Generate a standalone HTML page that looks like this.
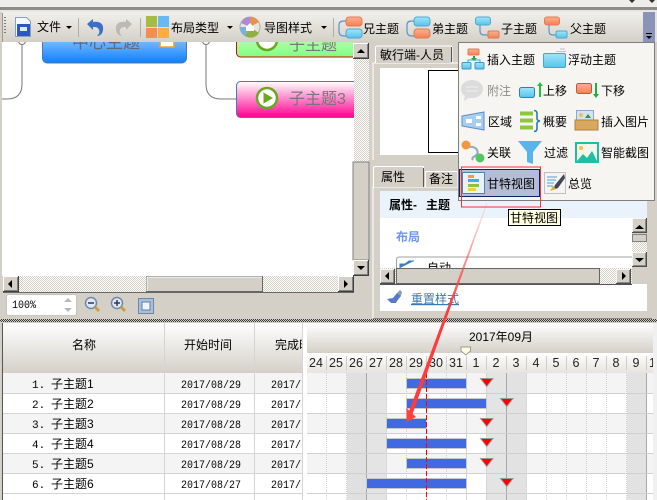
<!DOCTYPE html>
<html><head><meta charset="utf-8"><style>
html,body{margin:0;padding:0;background:#d4d0c8}
svg{display:block}
text{font-family:"Liberation Sans","WenQuanYi Zen Hei","Noto Sans CJK SC",sans-serif;font-size:13px;fill:#000}
.m{font-family:"Liberation Mono","WenQuanYi Zen Hei",monospace;font-size:11px}
.d{font-family:"Liberation Sans",sans-serif;font-size:12.5px;fill:#222;text-anchor:middle}
.c{text-anchor:middle}
</style></head><body>
<svg width="657" height="500" viewBox="0 0 657 500" xmlns="http://www.w3.org/2000/svg">
<defs>
<linearGradient id="tb" x1="0" y1="0" x2="0" y2="1"><stop offset="0" stop-color="#f2f0ec"/><stop offset="1" stop-color="#d4d0c8"/></linearGradient>
<linearGradient id="hd" x1="0" y1="0" x2="0" y2="1"><stop offset="0" stop-color="#fff"/><stop offset="1" stop-color="#d4d0c8"/></linearGradient>
<linearGradient id="dy" x1="0" y1="0" x2="0" y2="1"><stop offset="0" stop-color="#fff"/><stop offset="1" stop-color="#e6e4de"/></linearGradient>
<linearGradient id="bl" x1="0" y1="0" x2="0" y2="1"><stop offset="0" stop-color="#a8d4ff"/><stop offset="1" stop-color="#0f80ff"/></linearGradient>
<linearGradient id="gr" x1="0" y1="0" x2="0" y2="1"><stop offset="0" stop-color="#d8ffd0"/><stop offset="1" stop-color="#80ff80"/></linearGradient>
<linearGradient id="pk" x1="0" y1="0" x2="0" y2="1"><stop offset="0" stop-color="#fff"/><stop offset="1" stop-color="#ff0090"/></linearGradient>
<linearGradient id="cy" x1="0" y1="0" x2="0" y2="1"><stop offset="0" stop-color="#a4e4f8"/><stop offset="1" stop-color="#55c4ea"/></linearGradient>
<linearGradient id="or" x1="0" y1="0" x2="0" y2="1"><stop offset="0" stop-color="#fdb090"/><stop offset="1" stop-color="#f57f55"/></linearGradient>
<linearGradient id="ar" x1="0" y1="0" x2="0" y2="1"><stop offset="0" stop-color="#ff5050" stop-opacity=".1"/><stop offset=".5" stop-color="#ff3b3b"/><stop offset="1" stop-color="#ff3b3b"/></linearGradient>
<pattern id="ht" width="2" height="2" patternUnits="userSpaceOnUse"><rect width="2" height="2" fill="#fff"/><rect width="1" height="1" fill="#d4d0c8"/><rect x="1" y="1" width="1" height="1" fill="#d4d0c8"/></pattern>
<pattern id="dt" width="2" height="2" patternUnits="userSpaceOnUse"><rect width="2" height="2" fill="#d4d0c8"/><rect width="1" height="1" fill="#333"/><rect x="1" y="1" width="1" height="1" fill="#333"/></pattern>
<symbol id="b" viewBox="0 0 16 16" width="16" height="16"><rect width="16" height="16" fill="#404040"/><rect width="15" height="15" fill="#fff"/><rect x="1" y="1" width="14" height="14" fill="#808080"/><rect x="1" y="1" width="13" height="13" fill="#d4d0c8"/></symbol>
</defs>

<!-- window top -->
<rect width="657" height="500" fill="#d4d0c8"/>
<rect width="657" height="7" fill="#efedea"/>
<rect y="7" width="657" height="3" fill="#8e8c88"/>
<rect y="10" width="657" height="2" fill="#e8e6e2"/>
<path d="M629 0l3 3 3-3zM649 0l3 3 3-3" fill="#333"/>

<!-- canvas -->
<rect x="2" y="40" width="352" height="236" fill="#fff"/>
<path d="M22 40V84Q22 99 7 99H2M206 40V84Q206 99 221 99H236" fill="none" stroke="#777" stroke-width="1"/>
<circle cx="22" cy="41" r="3.500" fill="#fff" stroke="#777"/><circle cx="206" cy="41" r="3.500" fill="#fff" stroke="#777"/>
<rect x="42.500" y="30" width="144" height="33" rx="5" fill="url(#bl)" stroke="#4a7ab0"/>
<text x="72" y="48" style="font-size:17px;fill:#667">中心主题</text>
<rect x="160" y="38" width="14" height="9" fill="#fff" stroke="#f0a020" stroke-width="1.500"/>
<rect x="236.500" y="25" width="130" height="32" rx="4" fill="url(#gr)" stroke="#e00000"/>
<circle cx="267" cy="40" r="10" fill="#fff" stroke="#6aa820" stroke-width="2.500"/>
<text x="289" y="50" style="font-size:16px;fill:#777">子主题</text>
<rect x="236.500" y="81.500" width="130" height="36" rx="4" fill="url(#pk)" stroke="#4a7ab0"/>
<circle cx="267" cy="98" r="10" fill="#fff" stroke="#6aa820" stroke-width="2.500"/>
<path d="M263.500 92.500L273 98l-9.500 5.500z" fill="#6aa820"/>
<text x="289" y="104" style="font-size:16px;fill:#777">子主题3</text>
<rect x="354" y="42" width="19" height="236" fill="#d4d0c8"/>
<rect x="0" y="40" width="2" height="280" fill="#d4d0c8"/>

<!-- canvas v scroll -->
<rect x="354" y="58" width="15" height="104" fill="url(#ht)"/>
<use href="#b" x="353" y="43"/><path d="M357 53h8l-4-4z" fill="#000"/>
<rect x="353" y="162" width="16" height="98" fill="#d4d0c8" stroke="#808080"/>
<use href="#b" x="353" y="260"/><path d="M357 266h8l-4 4z" fill="#000"/>
<!-- canvas h scroll -->
<rect x="3" y="276" width="351" height="16" fill="url(#ht)"/>
<rect x="3" y="292" width="351" height="1" fill="#666"/>
<use href="#b" x="3" y="276"/><path d="M12 280v8l-4-4z" fill="#000"/>
<rect x="146.500" y="276.500" width="116" height="15" fill="#d4d0c8" stroke="#666"/>
<path d="M147 291V277H262" stroke="#fff" fill="none"/>
<use href="#b" x="338" y="276"/><path d="M344 280v8l4-4z" fill="#000"/>

<!-- zoom -->
<rect x="6.500" y="294.500" width="70" height="21" rx="2" fill="#fff" stroke="#c4c4bc"/>
<text x="12" y="308" class="m" textLength="24" lengthAdjust="spacingAndGlyphs">100%</text>
<path d="M64 302l4-4 4 4zM64 308l4 4 4-4" fill="#b8b8b8"/>
<circle cx="91" cy="303" r="5.500" fill="#dfe8f8" stroke="#7088a8" stroke-width="1.500"/><path d="M88 303h6" stroke="#335" stroke-width="1.500"/><path d="M95 307l4 4" stroke="#c8a040" stroke-width="3"/>
<circle cx="117" cy="303" r="5.500" fill="#dfe8f8" stroke="#7088a8" stroke-width="1.500"/><path d="M114 303h6M117 300v6" stroke="#335" stroke-width="1.500"/><path d="M121 307l4 4" stroke="#c8a040" stroke-width="3"/>
<rect x="138.500" y="298.500" width="15" height="15" fill="#a8c0dc" stroke="#6888ac"/><rect x="142" y="302" width="8" height="8" fill="#eef4fb" stroke="#6a7a98"/>
<rect x="0" y="319" width="657" height="3" fill="url(#dt)"/>

<!-- right top panel -->
<rect x="373" y="63" width="284" height="97" fill="#d4d0c8"/>
<path d="M373 160V63H648" stroke="#fff" fill="none"/>
<path d="M375.500 63V48q0-2 2-2H451q1 0 1 2V63" fill="#d4d0c8" stroke="#fff"/>
<path d="M451.500 47V62" stroke="#555"/>
<text x="380" y="59" style="font-size:12px">敏行端-人员</text>
<rect x="380" y="68" width="270" height="87" fill="#fff"/>
<rect x="428.500" y="70.500" width="60" height="82" fill="#fff" stroke="#000"/>

<!-- right bottom panel -->
<path d="M373 318V187H650" stroke="#fff" fill="none"/>
<path d="M373.500 187V168q0-1.500 1.500-1.500H423.500V187" fill="#d4d0c8" stroke="#fff"/>
<path d="M423.500 168V187" stroke="#555"/>
<text x="381" y="181" style="font-size:12px">属性</text>
<path d="M425.500 187V171.500H458V187" fill="#d4d0c8" stroke="#fff"/>
<text x="429" y="183" style="font-size:12px">备注</text>
<rect x="380" y="191" width="267" height="120" fill="#fff"/>
<rect x="380" y="191" width="267" height="27" fill="#eaf3fb"/>
<text x="389" y="209" style="font-size:12px;font-weight:bold">属性-</text>
<text x="426" y="209" style="font-size:12px;font-weight:bold">主题</text>
<text x="396" y="241" style="font-size:12px;font-weight:bold;fill:#6f96e8">布局</text>
<path d="M396.500 268V260q0-3 3-3H632" fill="#fff" stroke="#a0a0a0"/>
<path d="M400 268v-4h5l4-3h5" fill="#3a80c0" stroke="#3a80c0"/>
<text x="427" y="272" style="font-size:12px">自动</text>
<rect x="632" y="218" width="15" height="66" fill="#d4d0c8"/>
<rect x="632" y="241" width="15" height="11" fill="url(#ht)"/>
<use href="#b" x="632" y="218" width="15" height="15"/><path d="M635 229h9l-4.500-4z" fill="#000"/>
<rect x="632.500" y="234.500" width="14" height="7" fill="#d4d0c8" stroke="#808080"/>
<use href="#b" x="632" y="252" width="15" height="15"/><path d="M635 258h9l-4.500 4z" fill="#000"/>
<rect x="380" y="268" width="252" height="16" fill="url(#ht)"/>
<use href="#b" x="380" y="269" width="15" height="15"/><path d="M389 272v8l-4-4z" fill="#000"/>
<rect x="396.500" y="268.500" width="203" height="15" fill="#d4d0c8" stroke="#666"/>
<use href="#b" x="616" y="269" width="15" height="15"/><path d="M622 272v8l4-4z" fill="#000"/>
<path d="M380 284.500H632" stroke="#555"/>
<path d="M387 299l6-1 4-5 4 3-4 5-1 2-5 0z" fill="#5878c8"/><path d="M397 293l3-3 2 2-1 4z" fill="#8a9ab8"/>
<text x="411" y="303" style="font-size:12px;fill:#3b7ab0;text-decoration:underline">重置样式</text>
<path d="M373 318.500H652" stroke="#888"/>

<!-- toolbar -->
<rect x="2" y="12" width="641" height="30" fill="url(#tb)"/>
<rect x="2" y="13" width="1" height="29" fill="#9a9890"/>
<path d="M5 17v1M5 20v1M5 23v1M5 26v1M5 29v1M5 32v1" stroke="#777" stroke-width="2"/>
<path d="M15.500 17.500h11l4 4v15h-15z" fill="#f4f8fe" stroke="#8aa0c0"/><rect x="17" y="24" width="13" height="12" fill="#2a58c0"/><rect x="20" y="27" width="7" height="4" fill="#dfe8ff"/>
<text x="37" y="31" style="font-size:12px">文件</text>
<path d="M66 26h6l-3 3z" fill="#000"/>
<path d="M78.500 18V37" stroke="#b0aea8"/>
<path d="M87 24l6-5v3c7-1 11 2 10 8-.5 4-3 6-6 6 2-2 3-4 2-6-1-3-3-3-6-3v3z" fill="#3a70c8"/>
<path d="M132 24l-6-5v3c-7-1-11 2-10 8 .5 4 3 6 6 6-2-2-3-4-2-6 1-3 3-3 6-3v3z" fill="#bcbab6"/>
<path d="M140.500 18V37" stroke="#b0aea8"/>
<rect x="146" y="16" width="11" height="11" fill="#a4bb44"/><rect x="158" y="16" width="11" height="11" fill="#68b8f4"/><rect x="146" y="28" width="11" height="10" fill="#f78a58"/><rect x="158" y="28" width="11" height="10" fill="#fbad44"/>
<text x="171" y="32" style="font-size:12px">布局类型</text>
<path d="M227 26h6l-3 3z" fill="#000"/>
<circle cx="250" cy="27" r="10" fill="#e8e4d8" stroke="#aaa"/>
<path d="M250 17a10 10 0 0 1 9 5l-9 5z" fill="#e89050"/><path d="M250 17a10 10 0 0 0-9 6l9 4z" fill="#b088d8"/><path d="M240 27a10 10 0 0 0 5 9l5-9z" fill="#78b0e0"/><path d="M245 36a10 10 0 0 0 14-3l-9-6z" fill="#90b040"/>
<path d="M246 27l4-4 4 4v4h-8z" fill="#fff"/>
<text x="264" y="32" style="font-size:12px">导图样式</text>
<path d="M321 26h6l-3 3z" fill="#000"/>
<path d="M333.500 18V37" stroke="#b0aea8"/>

<path d="M350 21h-6q-5 0-5 4v6q0 5 5 5h6" fill="none" stroke="#5598c8" stroke-width="1.200"/>
<rect x="346" y="17" width="16" height="9" rx="3" fill="url(#or)" stroke="#e07a50"/><rect x="346" y="29" width="16" height="9" rx="3" fill="url(#cy)" stroke="#50a8d0"/>
<text x="363" y="33" style="font-size:12px">兄主题</text>
<path d="M418 21h-6q-5 0-5 4v6q0 5 5 5h6" fill="none" stroke="#5598c8" stroke-width="1.200"/>
<rect x="414" y="17" width="16" height="9" rx="3" fill="url(#cy)" stroke="#50a8d0"/><rect x="414" y="29" width="16" height="9" rx="3" fill="url(#or)" stroke="#e07a50"/>
<text x="432" y="33" style="font-size:12px">弟主题</text>
<path d="M480 25v6q0 4 4 4h5" fill="none" stroke="#5598c8" stroke-width="1.200"/>
<rect x="475.500" y="17" width="15" height="8" rx="2.500" fill="url(#cy)" stroke="#50a8d0"/><rect x="488" y="31" width="11" height="7" rx="1.500" fill="url(#or)" stroke="#e07a50"/>
<text x="501" y="33" style="font-size:12px">子主题</text>
<path d="M549 25v6q0 4 4 4h5" fill="none" stroke="#5598c8" stroke-width="1.200"/>
<rect x="544.500" y="17" width="15" height="8" rx="2.500" fill="url(#or)" stroke="#e07a50"/><rect x="556" y="31" width="11" height="7" rx="1.500" fill="url(#cy)" stroke="#50a8d0"/>
<text x="570" y="33" style="font-size:12px">父主题</text>
<rect x="643" y="12" width="12" height="30" fill="#8a94b8"/>
<path d="M646 33.500h6" stroke="#000"/><path d="M646 36h6l-3 3z" fill="#000"/>
<rect x="655" y="12" width="2" height="30" fill="#e4e2dc"/>

<!-- dropdown menu -->
<rect x="458.500" y="42.500" width="196" height="158" fill="#f7f5f2" stroke="#7e7e7e"/>
<!-- row1 -->
<rect x="468" y="49" width="11" height="6" rx="1" fill="url(#or)" stroke="#e07a50"/><path d="M473 56h2v2h2l-3 3-3-3h2z" fill="#30a030"/><path d="M468 62v-2h12v2" fill="none" stroke="#4aa0d0"/>
<rect x="462" y="62.500" width="9" height="6.500" rx="1" fill="url(#cy)" stroke="#3c98c8"/><rect x="475" y="62.500" width="9" height="6.500" rx="1" fill="url(#cy)" stroke="#3c98c8"/>
<text x="487" y="64" style="font-size:12px">插入主题</text>
<rect x="543.500" y="53.500" width="22" height="14" rx="1.500" fill="url(#cy)" stroke="#40a8cc"/><path d="M560 49h5M556 51.500h10" stroke="#a8c8dc"/>
<text x="568" y="64" style="font-size:12px">浮动主题</text>
<!-- row2 -->
<ellipse cx="472" cy="89" rx="11" ry="9" fill="#dcdcdc"/><path d="M465 95l-1 6 6-4z" fill="#dcdcdc"/><path d="M466 87h12M466 91h12" stroke="#efefef"/>
<text x="487" y="95" style="font-size:12px;fill:#8c8c8c">附注</text>
<rect x="519.500" y="87.500" width="15" height="10" rx="2" fill="url(#cy)" stroke="#3080b0"/><path d="M540 82l3 4h-2v11h-2V86h-2z" fill="#20c040"/>
<text x="543" y="95" style="font-size:12px">上移</text>
<rect x="576.500" y="83.500" width="15" height="10" rx="2" fill="url(#or)" stroke="#d05030"/><path d="M595 83h2v11h2l-3 4-3-4h2z" fill="#20b040"/>
<text x="601" y="95" style="font-size:12px">下移</text>
<!-- row3 -->
<path d="M462 116l22-4v18l-22-4z" fill="#a8cdf0" stroke="#5890c8"/><rect x="466" y="119" width="6" height="4" fill="#fff"/><rect x="476" y="116" width="5" height="3" fill="#fff"/><rect x="476" y="123" width="5" height="3" fill="#fff"/>
<text x="488" y="126" style="font-size:12px">区域</text>
<path d="M520 113.500h13M520 120.500h13M520 127.500h13" stroke="#8cc63c" stroke-width="4"/>
<path d="M534 110.500q3 0 3 3v5q0 2 3 2.500q-3 .5-3 2.500v5q0 3-3 3" fill="none" stroke="#2a7ab8" stroke-width="1.600"/>
<text x="543" y="126" style="font-size:12px">概要</text>
<rect x="576.500" y="110.500" width="17" height="14" fill="#cfe4f6" stroke="#8aa8c8"/><circle cx="581" cy="115" r="2" fill="#f4c040"/><path d="M588 114l3 4h-6z" fill="#4a8a30"/>
<rect x="575" y="120" width="23" height="10" fill="#d8a860" stroke="#b08040"/>
<text x="601" y="126" style="font-size:12px">插入图片</text>
<!-- row4 -->
<path d="M467 147q8-1 10 3t-2 6-2 4" fill="none" stroke="#90a8c0" stroke-width="2"/><circle cx="466" cy="145" r="4.500" fill="#f09840"/><circle cx="480" cy="158" r="4.500" fill="#50c860"/>
<text x="487" y="157" style="font-size:12px">关联</text>
<path d="M518 141h24l-9 11v12l-6-2v-10z" fill="#58b4ec"/>
<text x="544" y="157" style="font-size:12px">过滤</text>
<rect x="575" y="142" width="24" height="21" fill="#1cc0a0"/><rect x="577" y="144" width="20" height="17" fill="#f4f4e8"/><circle cx="581" cy="148" r="2" fill="#f4c040"/><path d="M577 161l6-7 4 4 5-7 5 10z" fill="#1cc0a0"/>
<text x="601" y="157" style="font-size:12px">智能截图</text>
<!-- row5 highlighted -->
<rect x="459.500" y="169.500" width="80" height="27" fill="#b5bdd6" stroke="#0a246a"/>
<rect x="462.500" y="172.500" width="22" height="21" fill="#e8f2f8" stroke="#4a8aa8"/>
<path d="M468 175h6v3h-6z" fill="#f0a030"/><path d="M468 179h11v3h-11z" fill="#40b0e0"/><path d="M468 184h11v3h-11z" fill="#90c040"/><path d="M468 188h8v3h-8z" fill="#f0d040"/>
<text x="487" y="188" style="font-size:12px">甘特视图</text>
<rect x="544.500" y="172.500" width="21" height="21" fill="#f4f4f4" stroke="#c0c0c0"/><path d="M547 177h10M547 180h9M547 183h7M547 186h6" stroke="#50a0d0"/><path d="M564 174l-9 11-2 5 5-2 7-10z" fill="#445"/><path d="M553 186l-3 5 6-2z" fill="#e8b030"/>
<text x="568" y="188" style="font-size:12px">总览</text>

<!-- red box, tooltip -->
<rect x="461.500" y="167" width="79" height="40" fill="none" stroke="#ee3333"/>
<rect x="508.500" y="209.500" width="52" height="16" fill="#ffffe1" stroke="#000"/>
<text x="510" y="222" style="font-size:12px">甘特视图</text>

<!-- gantt table -->
<rect x="2" y="323" width="655" height="177" fill="#fff"/>
<rect x="2" y="323" width="1" height="177" fill="#555"/>
<rect x="3" y="323" width="300" height="50" fill="url(#hd)"/>
<text x="84" y="349" class="c" style="font-size:12px">名称</text>
<text x="208" y="349" class="c" style="font-size:12px">开始时间</text>
<text x="275" y="349" style="font-size:12px">完成时</text>
<rect x="303" y="323" width="4" height="177" fill="#fff"/>
<rect x="3" y="373" width="300" height="20" fill="#f4f4f4"/>
<rect x="3" y="413" width="300" height="20" fill="#f4f4f4"/>
<rect x="3" y="453" width="300" height="20" fill="#f4f4f4"/>
<rect x="302" y="323" width="5" height="50" fill="#fff"/>
<rect x="302" y="373" width="5" height="127" fill="#fff"/>
<path d="M3 393.500H302M3 413.500H302M3 433.500H302M3 453.500H302M3 473.500H302M3 493.500H302" stroke="#d4d4d4"/>
<path d="M164.500 323V500M254.500 323V500M302.500 323V500" stroke="#d4d4d4"/>
<rect x="303" y="323" width="3" height="177" fill="#fff"/>
<text x="32" y="388" class="m">1.</text><text x="51" y="388" style="font-size:12px">子主题1</text>
<text x="32" y="408" class="m">2.</text><text x="51" y="408" style="font-size:12px">子主题2</text>
<text x="32" y="428" class="m">3.</text><text x="51" y="428" style="font-size:12px">子主题3</text>
<text x="32" y="448" class="m">4.</text><text x="51" y="448" style="font-size:12px">子主题4</text>
<text x="32" y="468" class="m">5.</text><text x="51" y="468" style="font-size:12px">子主题5</text>
<text x="32" y="488" class="m">6.</text><text x="51" y="488" style="font-size:12px">子主题6</text>
<text x="181" y="388" class="m" textLength="60" lengthAdjust="spacingAndGlyphs">2017/08/29</text><text x="271" y="388" class="m" textLength="30" lengthAdjust="spacingAndGlyphs">2017/</text>
<text x="181" y="408" class="m" textLength="60" lengthAdjust="spacingAndGlyphs">2017/08/29</text><text x="271" y="408" class="m" textLength="30" lengthAdjust="spacingAndGlyphs">2017/</text>
<text x="181" y="428" class="m" textLength="60" lengthAdjust="spacingAndGlyphs">2017/08/28</text><text x="271" y="428" class="m" textLength="30" lengthAdjust="spacingAndGlyphs">2017/</text>
<text x="181" y="448" class="m" textLength="60" lengthAdjust="spacingAndGlyphs">2017/08/28</text><text x="271" y="448" class="m" textLength="30" lengthAdjust="spacingAndGlyphs">2017/</text>
<text x="181" y="468" class="m" textLength="60" lengthAdjust="spacingAndGlyphs">2017/08/29</text><text x="271" y="468" class="m" textLength="30" lengthAdjust="spacingAndGlyphs">2017/</text>
<text x="181" y="488" class="m" textLength="60" lengthAdjust="spacingAndGlyphs">2017/08/27</text><text x="271" y="488" class="m" textLength="30" lengthAdjust="spacingAndGlyphs">2017/</text>

<!-- gantt chart -->
<rect x="307" y="323" width="346" height="30" fill="url(#hd)"/>
<text x="501" y="341" class="c" style="font-size:12px">2017年09月</text>
<rect x="307" y="353" width="346" height="20" fill="url(#dy)"/>
<text x="316" y="367" class="d">24</text><text x="336" y="367" class="d">25</text><text x="356" y="367" class="d">26</text><text x="376" y="367" class="d">27</text><text x="396" y="367" class="d">28</text><text x="416" y="367" class="d">29</text><text x="436" y="367" class="d">30</text><text x="456" y="367" class="d">31</text><text x="476" y="367" class="d">1</text><text x="496" y="367" class="d">2</text><text x="516" y="367" class="d">3</text><text x="536" y="367" class="d">4</text><text x="556" y="367" class="d">5</text><text x="576" y="367" class="d">6</text><text x="596" y="367" class="d">7</text><text x="616" y="367" class="d">8</text><text x="636" y="367" class="d">9</text><text x="656" y="367" class="d">10</text>
<path d="M326.500 356V370M346.500 356V370M366.500 356V370M386.500 356V370M406.500 356V370M426.500 356V370M446.500 356V370M466.500 356V370M486.500 356V370M506.500 356V370M526.500 356V370M546.500 356V370M566.500 356V370M586.500 356V370M606.500 356V370M626.500 356V370M646.500 356V370" stroke="#cfcdc8"/>
<path d="M461 347h9.500v4l-4.700 4-4.800-4z" fill="#fdfde0" stroke="#999"/>
<rect x="307" y="373" width="346" height="127" fill="#fff"/>
<rect x="307" y="373" width="346" height="20" fill="#f4f4f4"/><rect x="307" y="413" width="346" height="20" fill="#f4f4f4"/><rect x="307" y="453" width="346" height="20" fill="#f4f4f4"/>
<rect x="347" y="373" width="20" height="127" fill="#e0e0e0"/><rect x="367" y="373" width="20" height="127" fill="#e4e4e4"/>
<rect x="487" y="373" width="20" height="127" fill="#e4e4e4"/><rect x="507" y="373" width="20" height="127" fill="#e2e2e2"/>
<rect x="627" y="373" width="20" height="127" fill="#e2e2e2"/>
<path d="M326.500 373V500M346.500 373V500M386.500 373V500M406.500 373V500M426.500 373V500M446.500 373V500M526.500 373V500M546.500 373V500M566.500 373V500M586.500 373V500M606.500 373V500M626.500 373V500" stroke="#d0d0d0" stroke-dasharray="1 1"/>
<path d="M366.500 373V500M506.500 373V500M646.500 373V500" stroke="#a8a8a8"/>
<path d="M466.500 373V500M486.500 373V500" stroke="#d4d4d4"/>
<path d="M307 393.500H653M307 413.500H653M307 433.500H653M307 453.500H653M307 473.500H653M307 493.500H653" stroke="#d0d0d0"/>
<g fill="#4169e1" stroke="#c8c8c8">
<rect x="406.500" y="378.500" width="60" height="10"/>
<rect x="406.500" y="398.500" width="80" height="10"/>
<rect x="386.500" y="418.500" width="40" height="10"/>
<rect x="386.500" y="438.500" width="80" height="10"/>
<rect x="406.500" y="458.500" width="60" height="10"/>
<rect x="366.500" y="478.500" width="100" height="10"/>
</g>
<path d="M426.500 373V500" stroke="#f00" stroke-dasharray="5 2"/>
<g fill="#f00" stroke="#999">
<path d="M480.500 378.500h12.500l-6.250 8z"/><path d="M500.500 398.500h12.500l-6.250 8z"/><path d="M480.500 418.500h12.500l-6.250 8z"/><path d="M480.500 438.500h12.500l-6.250 8z"/><path d="M480.500 458.500h12.500l-6.250 8z"/><path d="M500.500 478.500h12.500l-6.250 8z"/>
</g>
<rect x="653" y="323" width="4" height="177" fill="#f0f0f0"/>

<!-- red arrow -->
<path d="M486.500 203L487.500 203.500 412.500 414 408.500 412.500z" fill="url(#ar)"/>
<path d="M406.500 422L406.500 408 416 417z" fill="#ff4040"/>
</svg>
</body></html>
